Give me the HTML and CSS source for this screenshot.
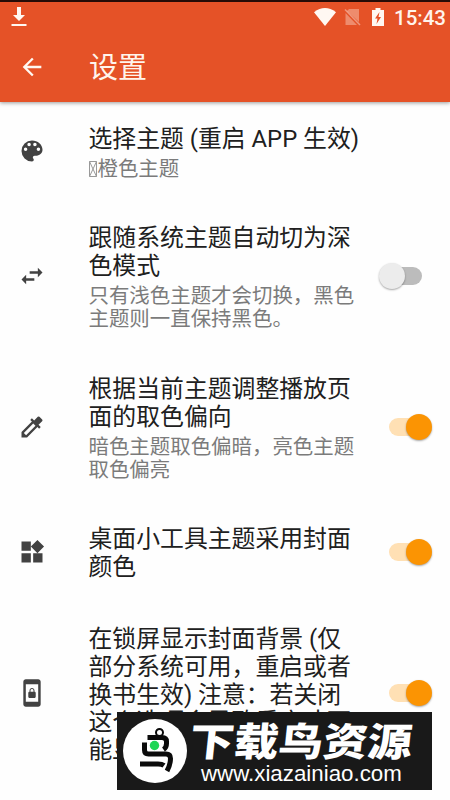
FILE: index.html
```html
<!DOCTYPE html>
<html lang="zh-CN">
<head>
<meta charset="utf-8">
<title>设置</title>
<link rel="stylesheet" href="styles.css">
</head>
<body>
<header class="top">
  <div class="status">
    <svg class="download" viewBox="0 0 16 20"><path d="M6 0h4v8h4l-6 6-6-6h4zM.5 17h15v2H.5z"/></svg>
    <svg class="wifi" viewBox="0 0 22 18"><path d="M0 4.2Q11-4.2 22 4.2L11 18z"/></svg>
    <svg class="sim" viewBox="0 0 17 18"><path opacity=".35" d="M5 1h10v13L3 3zM1.500 5L13 17H1.500z"/><path opacity=".4" d="M1 1.500L16 17" stroke="#fff" stroke-width="1.500"/></svg>
    <svg class="battery" viewBox="0 0 12 18"><path fill-rule="evenodd" d="M3.500 0h5v2H12v16H0V2h3.500zM7.500 4L3 10.500h2.500L4.500 16 9 9H6.500z"/></svg>
    <span class="clock">15:43</span>
  </div>
  <div class="bar">
    <svg class="back" viewBox="0 0 24 24"><path d="M20 11H7.830l5.590-5.590L12 4l-8 8 8 8 1.410-1.410L7.830 13H20v-2z"/></svg>
    <h1>设置</h1>
  </div>
</header>
<main>
  <section class="row short">
    <svg class="icon" viewBox="0 0 24 24"><path d="M12 3a9 9 0 0 0 0 18c.83 0 1.500-.67 1.500-1.500 0-.39-.15-.74-.39-1.010-.23-.26-.38-.61-.38-.99 0-.83.67-1.500 1.500-1.500H16c2.760 0 5-2.240 5-5 0-4.420-4.030-8-9-8zm-5.500 9a1.500 1.500 0 1 1 0-3 1.500 1.500 0 0 1 0 3zm3-4a1.500 1.500 0 1 1 0-3 1.500 1.500 0 0 1 0 3zm5 0a1.500 1.500 0 1 1 0-3 1.500 1.500 0 0 1 0 3zm3 4a1.500 1.500 0 1 1 0-3 1.500 1.500 0 0 1 0 3z"/></svg>
    <div class="text"><h2>选择主题 (重启 APP 生效)</h2><p><svg class="missing" viewBox="0 0 8 16"><path d="M.5.5h7v15h-7zL7.500 15.500M7.500.5L.5 15.500"/></svg>橙色主题</p></div>
  </section>
  <section class="row tall">
    <svg class="icon" viewBox="0 0 24 24"><path d="M6.990 11L3 15l3.990 4v-3H14v-2H6.990v-3zM21 9l-3.990-4v3H10v2h7.010v3L21 9z"/></svg>
    <div class="text"><h2>跟随系统主题自动切为深<br>色模式</h2><p>只有浅色主题才会切换，黑色<br>主题则一直保持黑色。</p></div>
    <span class="switch"></span>
  </section>
  <section class="row tall">
    <svg class="icon" viewBox="0 0 24 24"><path d="M20.710 5.630l-2.340-2.340a1 1 0 0 0-1.410 0l-3.120 3.120-1.930-1.910-1.410 1.410 1.420 1.420L3 16.250V21h4.750l8.920-8.920 1.420 1.420 1.410-1.410-1.920-1.920 3.120-3.120a1 1 0 0 0 .01-1.420zM6.920 19L5 17.080l8.060-8.060 1.920 1.920L6.920 19z"/></svg>
    <div class="text"><h2>根据当前主题调整播放页<br>面的取色偏向</h2><p>暗色主题取色偏暗，亮色主题<br>取色偏亮</p></div>
    <span class="switch on"></span>
  </section>
  <section class="row short">
    <svg class="icon" viewBox="0 0 24 24"><path d="M13 13v8h8v-8h-8zM3 21h8v-8H3v8zM3 3v8h8V3H3zm13.660-1.310L11 7.340 16.660 13l5.660-5.660-5.660-5.650z"/></svg>
    <div class="text"><h2>桌面小工具主题采用封面<br>颜色</h2></div>
    <span class="switch on"></span>
  </section>
  <section class="row lock">
    <svg class="icon" viewBox=".7 .7 22.600 22.600"><path d="M17 1H7c-1.100 0-2 .9-2 2v18c0 1.100.9 2 2 2h10c1.100 0 2-.9 2-2V3c0-1.100-.9-2-2-2zm0 18H7V5h10v14zm-6.200-8v-1a1.200 1.200 0 0 1 2.400 0v1h-2.400zM10 16h4c.55 0 1-.45 1-1v-3c0-.55-.45-1-1-1v-1c0-1.110-.9-2-2-2s-2 .89-2 2v1c-.55 0-1 .45-1 1v3c0 .55.45 1 1 1z"/></svg>
    <div class="text"><h2>在锁屏显示封面背景 (仅<br>部分系统可用，重启或者<br>换书生效) 注意：若关闭<br>这个选项会导致重启才可<br>能显示</h2></div>
    <span class="switch on"></span>
  </section>
</main>
<aside class="watermark">
  <svg class="bird" viewBox="0 0 64 64"><circle cx="32" cy="32" r="32" fill="#fff"/><g fill="none" stroke="#0b0b0b" stroke-width="5"><circle cx="36.500" cy="13.500" r="3.500" stroke-width="2"/><path d="M24.500 18.500H39q4.500 0 4.500 4v2q0 4-3 6M21.500 23.500V31q0 4 4 4H43q4.500 0 4.500 4.500 0 6-3.500 12.500M17 45h18q4 0 6 1.500"/></g><circle cx="31.500" cy="26.500" r="4.700" fill="#1fd655"/></svg>
  <div class="brand"><strong>下载鸟资源</strong><span>www.xiazainiao.com</span></div>
</aside>
</body>
</html>
```
FILE: styles.css
```css
* { box-sizing: border-box; }
body {
  margin: 0;
  width: 450px;
  height: 800px;
  overflow: hidden;
  position: relative;
  background: #fefefe;
  font-family: Roboto, "Noto Sans CJK SC", sans-serif;
}
svg { display: block; flex: none; }
h1, h2, p { margin: 0; font-weight: 400; white-space: nowrap; }
.top {
  height: 102px;
  background: #e55227;
  border-top: 2px solid #260b06;
  box-shadow: 0 1px 4px rgba(0, 0, 0, .4);
  color: #fff4ec;
}
.status { height: 30px; display: flex; align-items: center; padding: 0 4px 0 11px; }
.status svg, .back { fill: #fff8f2; }
.download { width: 16px; height: 20px; }
.wifi { width: 22px; height: 18px; margin-left: auto; }
.sim { width: 17px; height: 18px; margin-left: 8px; }
.battery { width: 12px; height: 18px; margin-left: 11px; }
.clock { margin-left: 10px; width: 52px; font-size: 20.5px; font-weight: 500; line-height: 30px; padding-top: 1px; }
.bar { height: 70px; display: flex; align-items: center; padding-left: 18px; }
.back { width: 28px; height: 28px; }
h1 { margin-left: 43px; font-size: 29px; line-height: 40px; padding-top: 2px; }
.row { display: flex; align-items: center; padding: 0 16px 0 18px; }
.short { height: 98.500px; }
.tall { height: 151px; }
.lock { height: 184px; }
.icon { width: 28px; height: 28px; fill: #424242; }
.text { margin-left: 42.500px; padding-top: 5px; flex: 1; }
h2 { font-size: 23.850px; line-height: 27.800px; color: #202020; }
p { font-size: 20.450px; line-height: 23.800px; color: #7b7b7b; margin-top: 4px; }
.missing { display: inline-block; width: 8px; height: 16px; margin-right: 1px; vertical-align: -1px; fill: none; stroke: #999; stroke-width: 1; }
.switch { position: relative; width: 34px; height: 18px; margin-right: 12px; flex: none; border-radius: 9px; background: #bcbcbc; }
.switch::before {
  content: "";
  position: absolute;
  top: -4px;
  left: -9px;
  width: 26px;
  height: 26px;
  border-radius: 50%;
  background: #ececec;
  box-shadow: 0 1px 2px rgba(0, 0, 0, .35);
}
.on { width: 40px; margin-right: 5px; background: #ffe0b4; }
.on::before { left: 17px; background: #fb9403; }
.watermark {
  position: absolute;
  left: 117px;
  top: 712px;
  width: 315px;
  height: 78px;
  display: flex;
  align-items: center;
  padding-left: 6px;
  background: #191919;
  color: #fff;
}
.bird { width: 64px; height: 64px; }
.brand { flex: 1; display: flex; flex-direction: column; padding: 2px 0 0 3px; }
.brand strong { font: 900 44.500px/44px "Noto Sans CJK SC", sans-serif; white-space: nowrap; transform: skewX(-6deg) scaleY(.88); }
.brand span { margin-left: 11px; font: 22.300px/26px "Liberation Sans", sans-serif; }
```
